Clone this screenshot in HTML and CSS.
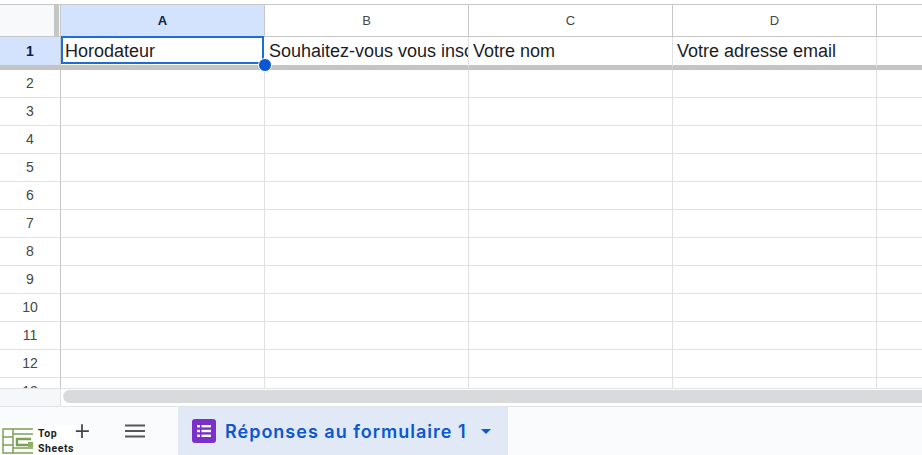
FILE: index.html
```html
<!DOCTYPE html>
<html lang="fr">
<head>
<meta charset="utf-8">
<title>Réponses au formulaire 1</title>
<link rel="stylesheet" href="styles.css">
</head>
<body>
<div class="page">
  <div class="sheet">
    <div class="row head-row">
      <div class="rowhead corner"><span class="freeze-handle"></span></div>
      <div class="cell colhead selected">A</div>
      <div class="cell colhead">B</div>
      <div class="cell colhead">C</div>
      <div class="cell colhead">D</div>
      <div class="cell colhead last"></div>
    </div>
    <div class="row first-row">
      <div class="rowhead selected">1</div>
      <div class="cell data active">Horodateur<span class="fill-handle"></span></div>
      <div class="cell data">Souhaitez-vous vous inscrire</div>
      <div class="cell data">Votre nom</div>
      <div class="cell data">Votre adresse email</div>
      <div class="cell data last"></div>
    </div>
    <div class="row"><div class="rowhead">2</div><div class="cell"></div><div class="cell"></div><div class="cell"></div><div class="cell"></div><div class="cell last"></div></div>
    <div class="row"><div class="rowhead">3</div><div class="cell"></div><div class="cell"></div><div class="cell"></div><div class="cell"></div><div class="cell last"></div></div>
    <div class="row"><div class="rowhead">4</div><div class="cell"></div><div class="cell"></div><div class="cell"></div><div class="cell"></div><div class="cell last"></div></div>
    <div class="row"><div class="rowhead">5</div><div class="cell"></div><div class="cell"></div><div class="cell"></div><div class="cell"></div><div class="cell last"></div></div>
    <div class="row"><div class="rowhead">6</div><div class="cell"></div><div class="cell"></div><div class="cell"></div><div class="cell"></div><div class="cell last"></div></div>
    <div class="row"><div class="rowhead">7</div><div class="cell"></div><div class="cell"></div><div class="cell"></div><div class="cell"></div><div class="cell last"></div></div>
    <div class="row"><div class="rowhead">8</div><div class="cell"></div><div class="cell"></div><div class="cell"></div><div class="cell"></div><div class="cell last"></div></div>
    <div class="row"><div class="rowhead">9</div><div class="cell"></div><div class="cell"></div><div class="cell"></div><div class="cell"></div><div class="cell last"></div></div>
    <div class="row"><div class="rowhead">10</div><div class="cell"></div><div class="cell"></div><div class="cell"></div><div class="cell"></div><div class="cell last"></div></div>
    <div class="row"><div class="rowhead">11</div><div class="cell"></div><div class="cell"></div><div class="cell"></div><div class="cell"></div><div class="cell last"></div></div>
    <div class="row"><div class="rowhead">12</div><div class="cell"></div><div class="cell"></div><div class="cell"></div><div class="cell"></div><div class="cell last"></div></div>
    <div class="row"><div class="rowhead">13</div><div class="cell"></div><div class="cell"></div><div class="cell"></div><div class="cell"></div><div class="cell last"></div></div>
  </div>
  <div class="scrollbar">
    <div class="scroll-corner"></div>
    <div class="scroll-track"><div class="scroll-thumb"></div></div>
  </div>
  <div class="tabbar">
    <div class="tools">
      <svg class="tool-icon" viewBox="0 0 16 16" width="20" height="20"><path d="M2.5 8h11M8 2.5v11" fill="none" stroke="#444746" stroke-width="1.4"/></svg>
      <svg class="tool-icon menu" viewBox="0 0 20 14" width="20" height="14"><path d="M0 1.5h20M0 7h20M0 12.5h20" fill="none" stroke="#555857" stroke-width="1.8"/></svg>
    </div>
    <div class="tab">
      <svg class="forms-icon" viewBox="0 0 24 24" width="24" height="24">
        <rect width="24" height="24" rx="3" fill="#7b2fc9"/>
        <g fill="#fff"><rect x="5" y="6" width="3" height="2.4"/><rect x="5" y="10.8" width="3" height="2.4"/><rect x="5" y="15.6" width="3" height="2.4"/><rect x="9.5" y="6" width="9.5" height="2.4"/><rect x="9.5" y="10.8" width="9.5" height="2.4"/><rect x="9.5" y="15.6" width="9.5" height="2.4"/></g>
      </svg>
      <span class="tab-label">Réponses au formulaire 1</span>
      <svg class="caret" viewBox="0 0 10 5" width="10" height="5"><path d="M0 0h10L5 5z" fill="#0b57d0"/></svg>
    </div>
  </div>
  <div class="watermark">
    <svg class="wm-logo" viewBox="0 0 31 26" width="31" height="26">
      <g fill="none" stroke="#7f9f56" stroke-width="1.5">
        <path d="M31 1H1v24h30"/>
        <path d="M1 9h10M1 17h10M11 1v24M11 6h20M11 20h20"/>
      </g>
      <path d="M29 11H15v6h11" fill="none" stroke="#7f9f56" stroke-width="2.4"/>
      <rect x="26" y="14" width="5" height="5" fill="#8fae66"/>
    </svg>
    <div class="wm-text"><span>Top</span><span>Sheets</span></div>
  </div>
</div>
</body>
</html>
```
FILE: styles.css
```css
* { box-sizing: border-box; }
html, body { margin: 0; padding: 0; }
body { width: 922px; height: 455px; overflow: hidden; background: #fff; font-family: "Liberation Sans", Arial, sans-serif; }
.page { position: relative; display: flex; flex-direction: column; width: 922px; height: 455px; padding-top: 4px; }

.sheet { height: 384px; overflow: hidden; flex: none; }
.row { display: flex; height: 28px; }
.head-row { height: 33px; border-top: 1px solid #c7c7c7; }
.first-row { height: 33px; }

.rowhead { position: relative; flex: none; width: 61px; display: flex; align-items: center; justify-content: center; padding-bottom: 1px; font-size: 14px; color: #444746; border-right: 1px solid #c7c7c7; border-bottom: 1px solid #e1e1e1; background: #fff; }
.corner { background: #f8f9fa; border-bottom-color: #c7c7c7; }
.freeze-handle { position: absolute; right: 1px; top: 0; bottom: 0; width: 5px; background: #c4c7c5; }
.cell { position: relative; flex: none; width: 204px; border-right: 1px solid #e1e1e1; border-bottom: 1px solid #e1e1e1; }
.cell.last { width: 46px; border-right: 0; }
.colhead { display: flex; align-items: center; justify-content: center; font-size: 13px; color: #444746; border-right-color: #c7c7c7; border-bottom-color: #c7c7c7; }
.colhead.selected { background: #d3e3fd; color: #0b1f4b; font-weight: 700; }
.rowhead.selected { background: #d3e3fd; color: #0b1f4b; font-weight: 700; }
.first-row .rowhead { border-bottom: 5px solid #c4c4c4; }
.data { display: block; padding: 3px 0 0 4px; font-size: 18px; line-height: 22px; color: #1a1d1f; white-space: nowrap; overflow: hidden; border-bottom: 5px solid #c4c4c4; }
.data.active { overflow: visible; z-index: 2; padding: 3px 0 0 4px; border: 0; background: linear-gradient(#fff, #fff) top / 100% 28px no-repeat, #c4c4c4; }
.data.active::after { content: ""; box-sizing: border-box; position: absolute; left: 0; top: -1px; width: 203px; height: 28px; border: 2px solid #1a6fd4; pointer-events: none; }
.fill-handle { position: absolute; z-index: 3; right: -7px; top: 21px; width: 14px; height: 14px; border-radius: 50%; background: #0b57d0; border: 1px solid #fff; }

.scrollbar { display: flex; height: 18px; flex: none; }
.scroll-corner { width: 61px; flex: none; background: #f6f7f8; border-right: 1px solid #e1e1e1; border-top: 1px solid #e1e1e1; }
.scroll-track { flex: 1; padding: 1px 0 2px 2px; background: #fff; border-top: 1px solid #e1e1e1; }
.scroll-thumb { height: 13px; border-radius: 7px 0 0 7px; background: #d9dadc; }

.tabbar { flex: 1; display: flex; background: #f9fbfd; border-top: 1px solid #e1e3e6; }
.tools { width: 178px; flex: none; display: flex; align-items: center; padding: 0 0 0 72px; gap: 33px; }
.tool-icon { flex: none; display: block; }
.menu { width: 20px; }
.tab { width: 330px; flex: none; display: flex; align-items: center; padding-left: 14px; background: #e1e9f7; }
.forms-icon { flex: none; }
.tab-label { margin-left: 9px; font-family: Inter, Roboto, sans-serif; font-weight: 600; font-size: 18px; letter-spacing: 1px; color: #0b57d0; white-space: nowrap; }
.caret { margin-left: 14px; flex: none; }

.watermark { position: absolute; left: 0; bottom: 0; width: 76px; height: 30px; display: flex; align-items: flex-start; background: rgba(255,255,255,0.85); }
.wm-logo { display: block; margin: 3px 0 0 2px; flex: none; }
.wm-text { display: flex; flex-direction: column; margin: 1px 0 0 5px; font-family: Roboto, sans-serif; font-weight: 700; font-size: 10.5px; letter-spacing: 0.55px; line-height: 15px; color: #1c1c1c; }
```
